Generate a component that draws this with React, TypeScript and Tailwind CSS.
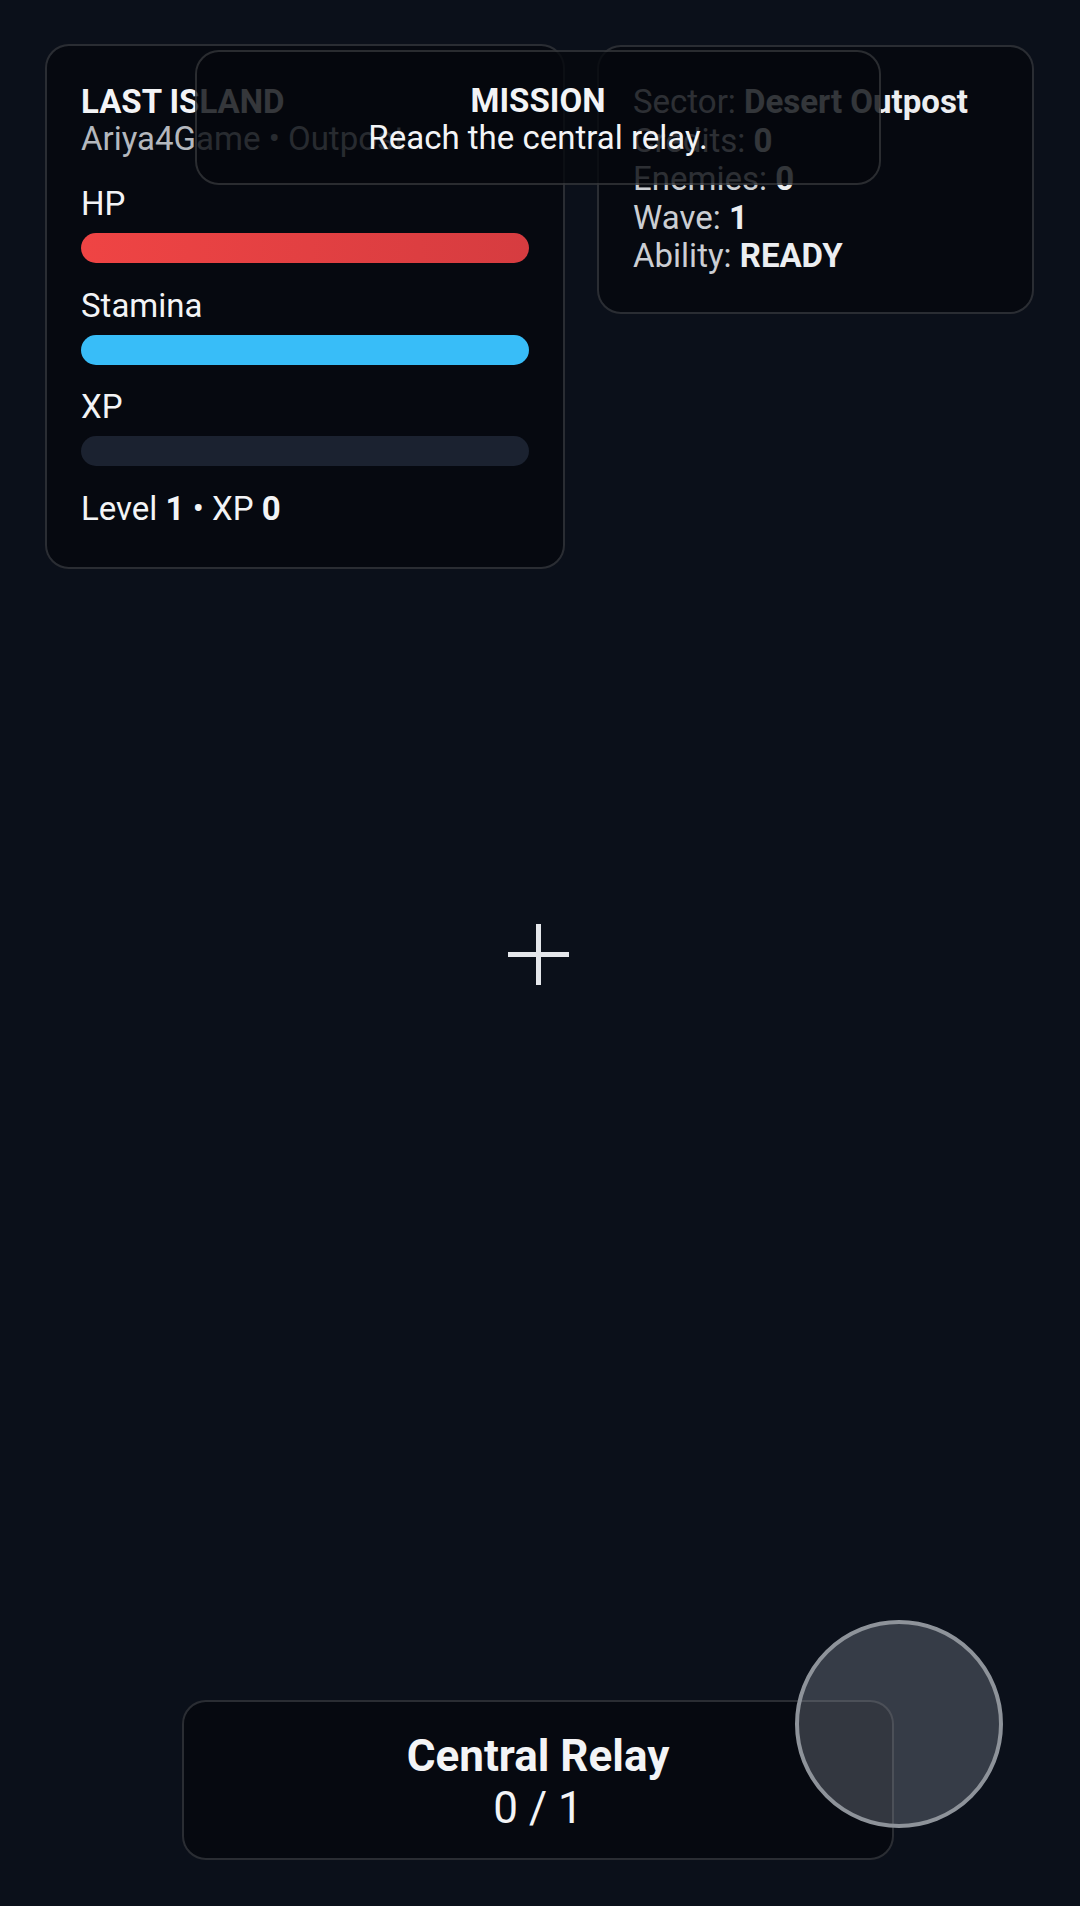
const Bar = ({ className }: { className: string }) => (
  <div className={`mt-[11px] h-[30px] w-full rounded-full ${className}`} />
);

const StatsPanel = () => {
  return (
    <div className="w-[520px] rounded-[24px] border-2 border-white/15 bg-[#06090f]/90 px-[34px] pt-[37px] pb-[40px] text-[33px]">
      <div className="font-bold leading-[37px] text-[#f3f4f6]">LAST ISLAND</div>
      <div className="leading-[37px] text-[#b4b8be]">Ariya4Game • Outpost</div>

      <div className="mt-[29px] leading-[36px] text-[#f3f4f6]">HP</div>
      <Bar className="bg-gradient-to-r from-[#ef4444] to-[#d63c40]" />

      <div className="mt-[25px] leading-[36px] text-[#f3f4f6]">Stamina</div>
      <Bar className="bg-[#38bdf8]" />

      <div className="mt-[24px] leading-[36px] text-[#f3f4f6]">XP</div>
      <Bar className="bg-[#1b2230]" />

      <div className="mt-[25px] leading-[36px] text-[#f3f4f6]">
        Level <span className="font-bold">1</span> • XP <span className="font-bold">0</span>
      </div>
    </div>
  );
};

const InfoPanel = () => {
  const rows = [
    { label: "Sector:", value: "Desert Outpost" },
    { label: "Credits:", value: "0" },
    { label: "Enemies:", value: "0" },
    { label: "Wave:", value: "1" },
    { label: "Ability:", value: "READY" },
  ];
  return (
    <div className="mt-[1px] w-[437px] rounded-[24px] border-2 border-white/15 bg-[#06090f]/90 px-[34px] pt-[36px] pb-[36px] text-[33px] leading-[38.5px]">
      {rows.map((r) => (
        <div key={r.label} className="whitespace-nowrap text-[#cbced3]">
          {r.label} <span className="font-bold text-[#eceef1]">{r.value}</span>
        </div>
      ))}
    </div>
  );
};

export default function App() {
  return (
    <div className="relative flex h-[1906px] w-[1080px] flex-col overflow-hidden bg-[#0b101a] font-['Roboto',sans-serif]">
      <div className="flex items-start justify-between pl-[45px] pr-[46px] pt-[44px]">
        <StatsPanel />
        <InfoPanel />
      </div>

      {/* mission banner sits over both panels */}
      <div className="absolute left-[195px] top-[50px] w-[686px] rounded-[24px] border-2 border-white/15 bg-[#05080d]/80 pt-[30px] pb-[27px] text-center text-[33px] leading-[37px] text-[#f3f4f6]">
        <div className="font-bold">MISSION</div>
        <div>Reach the central relay.</div>
      </div>

      {/* crosshair */}
      <div className="absolute left-[508px] top-[924px] h-[61px] w-[61px]">
        <div className="absolute left-[28px] top-0 h-[61px] w-[5px] bg-[#e5e7eb]" />
        <div className="absolute left-0 top-[28px] h-[5px] w-[61px] bg-[#e5e7eb]" />
      </div>

      <div className="mt-auto mb-[46px] ml-[182px] w-[712px] rounded-[24px] border-2 border-white/15 bg-[#06090f]/90 pt-[28px] pb-[24px] text-center text-[44px] leading-[52px] text-[#f3f4f6]">
        <div className="font-bold">Central Relay</div>
        <div>0 / 1</div>
      </div>

      {/* joystick */}
      <div className="absolute left-[795px] top-[1620px] h-[208px] w-[208px] rounded-full border-4 border-[#8e939a] bg-[#9ca3af]/30" />
    </div>
  );
}
